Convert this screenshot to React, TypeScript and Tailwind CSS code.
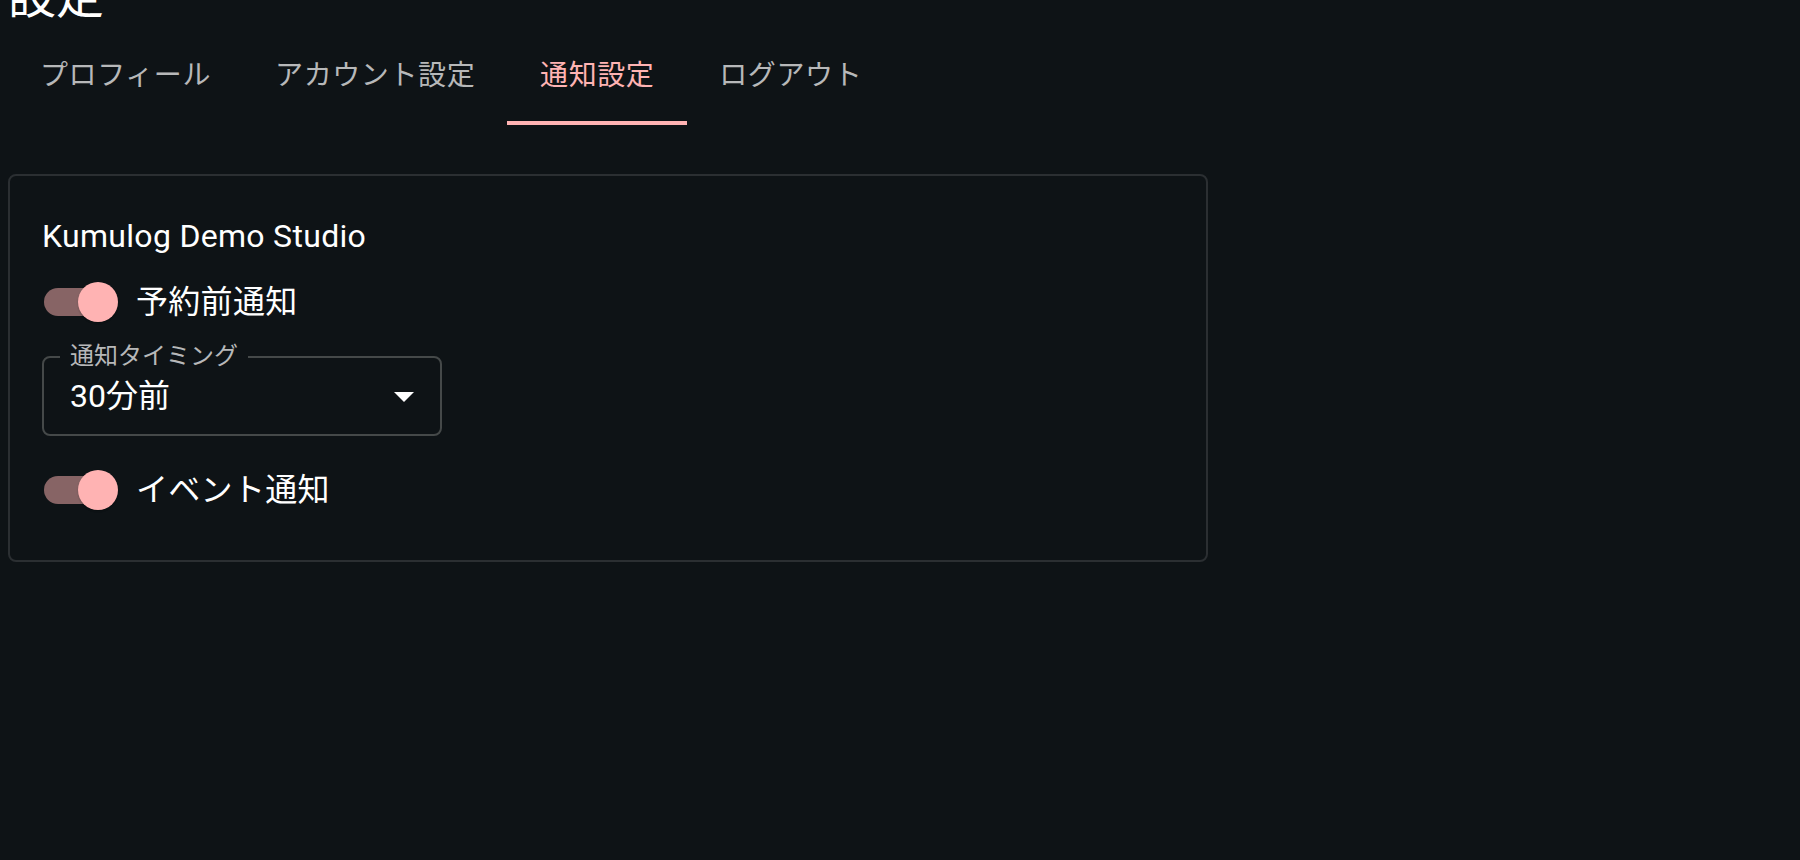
const tabs = ['プロフィール', 'アカウント設定', '通知設定', 'ログアウト'];
const activeTab = 2;

const Toggle = ({ checked }: { checked: boolean }) => (
  <span className="relative ml-[-22px] inline-flex h-[76px] w-[116px] shrink-0 p-[24px]">
    <span className={`h-full w-full rounded-[14px] ${checked ? 'bg-[#876465]' : 'bg-[#5b5f62]'}`} />
    <span
      className={`absolute top-[18px] h-[40px] w-[40px] rounded-full shadow-[0_2px_2px_-1px_rgba(0,0,0,0.2),0_1px_2px_0_rgba(0,0,0,0.14)] ${
        checked ? 'left-[58px] bg-[#ffb3b3]' : 'left-[18px] bg-[#e0e0e0]'
      }`}
    />
  </span>
);

const SwitchRow = ({ label }: { label: string }) => (
  <label className="flex items-center">
    <Toggle checked />
    <span className="text-[32px] leading-[1.5] tracking-[0.3px] text-white">{label}</span>
  </label>
);

export default function App() {
  return (
    <div className="flex min-h-screen flex-col overflow-hidden bg-[#0e1316] px-[8px] font-['Roboto','Noto_Sans_CJK_JP',sans-serif]">
      <h1 className="mt-[-35px] text-[48px] font-normal leading-[64px] text-white">設定</h1>

      {/* tabs */}
      <div className="flex h-[96px]">
        {tabs.map((tab, i) => (
          <button
            key={tab}
            className={`relative flex min-w-[180px] items-center justify-center px-[32px] pb-[3px] text-[28px] font-normal leading-[1.25] tracking-[0.6px] ${
              i === activeTab ? 'text-[#ffb3b3]' : 'text-[#b7b8b9]'
            }`}
          >
            {tab}
            {i === activeTab && <span className="absolute bottom-0 left-0 right-0 h-[4px] bg-[#ffb3b3]" />}
          </button>
        ))}
      </div>

      {/* notification settings */}
      <div className="mt-[49px] w-[1200px] rounded-[8px] border-2 border-[#2b2f32] p-[32px]">
        <h2 className="text-[32px] font-normal leading-[56px] tracking-[0.3px] text-white">Kumulog Demo Studio</h2>
        <SwitchRow label="予約前通知" />

        <div className="relative my-[16px] h-[80px] w-[400px] rounded-[8px] border-2 border-[#454949]">
          <span className="absolute left-[16px] top-[-2px] -translate-y-1/2 bg-[#0e1316] px-[10px] text-[24px] leading-none text-[#b7b8b9]">
            通知タイミング
          </span>
          <div className="flex h-full items-center justify-between pl-[26px] pr-[12px]">
            <span className="text-[32px] leading-[1.4375] text-white">30分前</span>
            <svg viewBox="0 0 24 24" className="h-[48px] w-[48px] fill-white">
              <path d="M7 10l5 5 5-5z" />
            </svg>
          </div>
        </div>

        <SwitchRow label="イベント通知" />
      </div>
    </div>
  );
}
